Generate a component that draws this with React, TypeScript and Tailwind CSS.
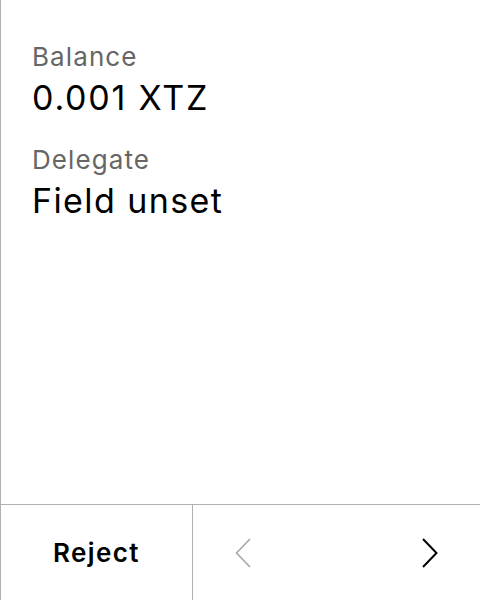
export default function App() {
  return (
    <div
      className="flex h-[600px] w-[480px] flex-col border-l border-[#b0b0b0] bg-white text-black"
      style={{ fontFamily: "Inter, 'Liberation Sans', sans-serif" }}
    >
      <div className="flex-1 pl-[31px] pt-[41px]">
        <div className="text-[26px] leading-[32px] tracking-[1.1px] text-[#666666]">Balance</div>
        <div className="mt-[5px] text-[34px] leading-[40px] tracking-[1.8px]">0.001 XTZ</div>
        <div className="mt-[26px] text-[26px] leading-[32px] tracking-[1.1px] text-[#666666]">Delegate</div>
        <div className="mt-[5px] text-[34px] leading-[40px] tracking-[1.4px]">Field unset</div>
      </div>
      <div className="flex h-[96px] border-t border-[#b0b0b0]">
        <div className="flex w-[192px] items-center justify-center border-r border-[#b0b0b0] text-[26px] font-semibold tracking-[1.4px]">
          Reject
        </div>
        <div className="flex flex-1 items-center justify-between px-[42px]">
          <svg width="16" height="30" viewBox="0 0 16 30" fill="none">
            <polyline points="15,1 1.5,15 15,29" stroke="#a6a6a6" strokeWidth="1.6" />
          </svg>
          <svg width="16" height="30" viewBox="0 0 16 30" fill="none">
            <polyline points="1,1 14.5,15 1,29" stroke="#000000" strokeWidth="2" />
          </svg>
        </div>
      </div>
    </div>
  );
}
